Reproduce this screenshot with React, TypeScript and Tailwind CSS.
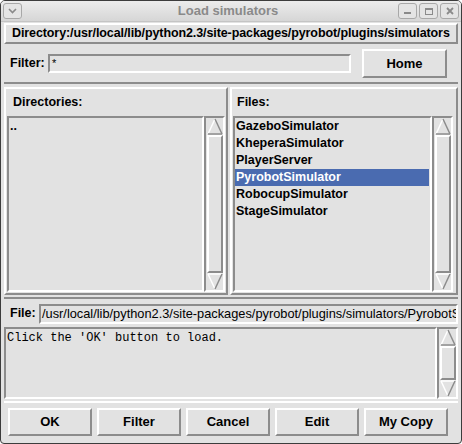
import React from 'react';

const FONT = { fontFamily: '"Liberation Sans", Arial, sans-serif' };
const MONO = { fontFamily: '"Liberation Mono", "Courier New", monospace' };

// Tk-ish reliefs
const raised = 'border-2 border-t-white border-l-white border-b-[#8c8c8c] border-r-[#8c8c8c]';
const sunken = 'border-2 border-t-[#8c8c8c] border-l-[#8c8c8c] border-b-white border-r-white';

function Arrow({ up }: { up: boolean }) {
  return (
    <svg width="16" height="17" viewBox="0 0 16 17" className="block shrink-0">
      {up ? (
        <>
          <polygon points="8,1 15,16 1,16" fill="#e2e2e2" />
          <line x1="8" y1="1" x2="1" y2="16" stroke="white" strokeWidth="1.5" />
          <line x1="8" y1="1" x2="15" y2="16" stroke="#8c8c8c" strokeWidth="1.5" />
          <line x1="1" y1="16" x2="15" y2="16" stroke="#8c8c8c" strokeWidth="1.5" />
        </>
      ) : (
        <>
          <polygon points="1,1 15,1 8,16" fill="#e2e2e2" />
          <line x1="1" y1="1" x2="15" y2="1" stroke="white" strokeWidth="1.5" />
          <line x1="1" y1="1" x2="8" y2="16" stroke="white" strokeWidth="1.5" />
          <line x1="15" y1="1" x2="8" y2="16" stroke="#8c8c8c" strokeWidth="1.5" />
        </>
      )}
    </svg>
  );
}

function Scrollbar({ className = '' }: { className?: string }) {
  return (
    <div className={`flex flex-col items-center w-[21px] bg-[#e2e2e2] ${sunken} ${className}`}>
      <Arrow up />
      <div className={`flex-1 w-[16px] ${raised}`} />
      <Arrow up={false} />
    </div>
  );
}

function TkButton({ label, className = '' }: { label: string; className?: string }) {
  return (
    <div className={`flex items-center justify-center font-bold text-[13px] text-black ${raised} ${className}`}>
      {label}
    </div>
  );
}

function TitleButton({ children }: { children: React.ReactNode }) {
  return (
    <div className="w-[19px] h-[16px] rounded-[3px] border border-[#a8a8a8] bg-[#e4e4e4] flex items-center justify-center">
      {children}
    </div>
  );
}

const files = [
  'GazeboSimulator',
  'KheperaSimulator',
  'PlayerServer',
  'PyrobotSimulator',
  'RobocupSimulator',
  'StageSimulator',
];

export default function App() {
  const selected = 'PyrobotSimulator';

  return (
    <div className="w-[462px] h-[444px] bg-white" style={FONT}>
      <div className="w-[462px] h-[444px] flex flex-col bg-[#e2e2e2] border border-[#3c3c3c] rounded-t-[5px] rounded-b-[4px] overflow-hidden">
        {/* title bar */}
        <div className="h-[21px] shrink-0 flex items-center px-[2px] bg-gradient-to-b from-[#ececec] to-[#d6d6d6] border-b border-[#c4c4c4]">
          <TitleButton>
            <svg width="9" height="6" viewBox="0 0 9 6">
              <polyline points="1,1 4.5,4.5 8,1" fill="none" stroke="#8a8a8a" strokeWidth="1.6" />
            </svg>
          </TitleButton>
          <div className="flex-1 text-center font-bold text-[13px] text-[#8a8a8a] pl-[36px]">Load simulators</div>
          <div className="flex gap-[2px]">
            <TitleButton>
              <div className="w-[7px] h-[2px] bg-[#8a8a8a] mt-[4px]" />
            </TitleButton>
            <TitleButton>
              <div className="w-[8px] h-[7px] border border-[#8a8a8a] border-t-2" />
            </TitleButton>
            <TitleButton>
              <svg width="8" height="8" viewBox="0 0 8 8">
                <path d="M1,1 L7,7 M7,1 L1,7" stroke="#8a8a8a" strokeWidth="1.8" />
              </svg>
            </TitleButton>
          </div>
        </div>

        {/* body */}
        <div className="flex-1 flex flex-col px-[3px] pt-[1px] pb-[3px]">
          {/* directory label */}
          <div className={`h-[21px] flex items-center pl-[6px] font-bold text-[12.5px] tracking-[-0.1px] text-black whitespace-nowrap overflow-hidden ${raised}`}>
            Directory:/usr/local/lib/python2.3/site-packages/pyrobot/plugins/simulators
          </div>

          {/* filter row */}
          <div className="h-[39px] flex items-center border-b-2 border-[#8c8c8c] mt-[1px]">
            <div className="pl-[6px] w-[44px] font-bold text-[12.5px]">Filter:</div>
            <div className={`w-[303px] h-[19px] flex items-center pl-[2px] text-[11px] ${sunken}`}>*</div>
            <TkButton label="Home" className="ml-[11px] w-[85px] h-[29px]" />
          </div>

          {/* lists */}
          <div className="flex gap-[2px] mt-[3px] pb-[2px] border-b-2 border-[#8c8c8c]">
            <div className={`w-[224px] h-[208px] flex flex-col pl-[1px] pr-[1px] pb-[1px] ${raised}`}>
              <div className="h-[27px] flex items-center pl-[6px] font-bold text-[12.5px]">Directories:</div>
              <div className="flex flex-1">
                <div className={`flex-1 bg-[#e2e2e2] ${sunken}`}>
                  <div className="font-bold text-[12.5px] leading-[17px] pl-[1px]">..</div>
                </div>
                <Scrollbar />
              </div>
            </div>
            <div className={`flex-1 h-[208px] flex flex-col pl-[1px] pr-[3px] pb-[1px] ${raised}`}>
              <div className="h-[27px] flex items-center pl-[4px] font-bold text-[12.5px]">Files:</div>
              <div className="flex flex-1">
                <div className={`flex-1 bg-[#e2e2e2] ${sunken}`}>
                  {files.map((f) => (
                    <div
                      key={f}
                      className={`font-bold text-[12.5px] leading-[17px] pl-[1px] mr-[1px] ${
                        f === selected ? 'bg-[#4a6bb0] text-white' : 'text-black'
                      }`}
                    >
                      {f}
                    </div>
                  ))}
                </div>
                <Scrollbar />
              </div>
            </div>
          </div>

          {/* file row */}
          <div className="h-[27px] flex items-center mt-[1px]">
            <div className="pl-[6px] w-[35px] font-bold text-[12.5px]">File:</div>
            <div className={`flex-1 h-[20px] flex items-center pl-[1px] text-[12.8px] whitespace-nowrap overflow-hidden ${sunken}`}>
              /usr/local/lib/python2.3/site-packages/pyrobot/plugins/simulators/PyrobotSimulator.py
            </div>
          </div>

          {/* message area */}
          <div className="flex h-[72px]">
            <div className={`flex-1 ${sunken}`}>
              <div className="text-[12px] leading-[15px] pl-[1px] pt-[2px]" style={MONO}>
                Click the 'OK' button to load.
              </div>
            </div>
            <Scrollbar />
          </div>

          {/* buttons */}
          <div className="flex-1 flex items-center gap-[5px] px-[4px] border-t-2 border-white mt-[2px]">
            {['OK', 'Filter', 'Cancel', 'Edit', 'My Copy'].map((b) => (
              <TkButton key={b} label={b} className="w-[84px] h-[28px]" />
            ))}
          </div>
        </div>
      </div>
    </div>
  );
}
